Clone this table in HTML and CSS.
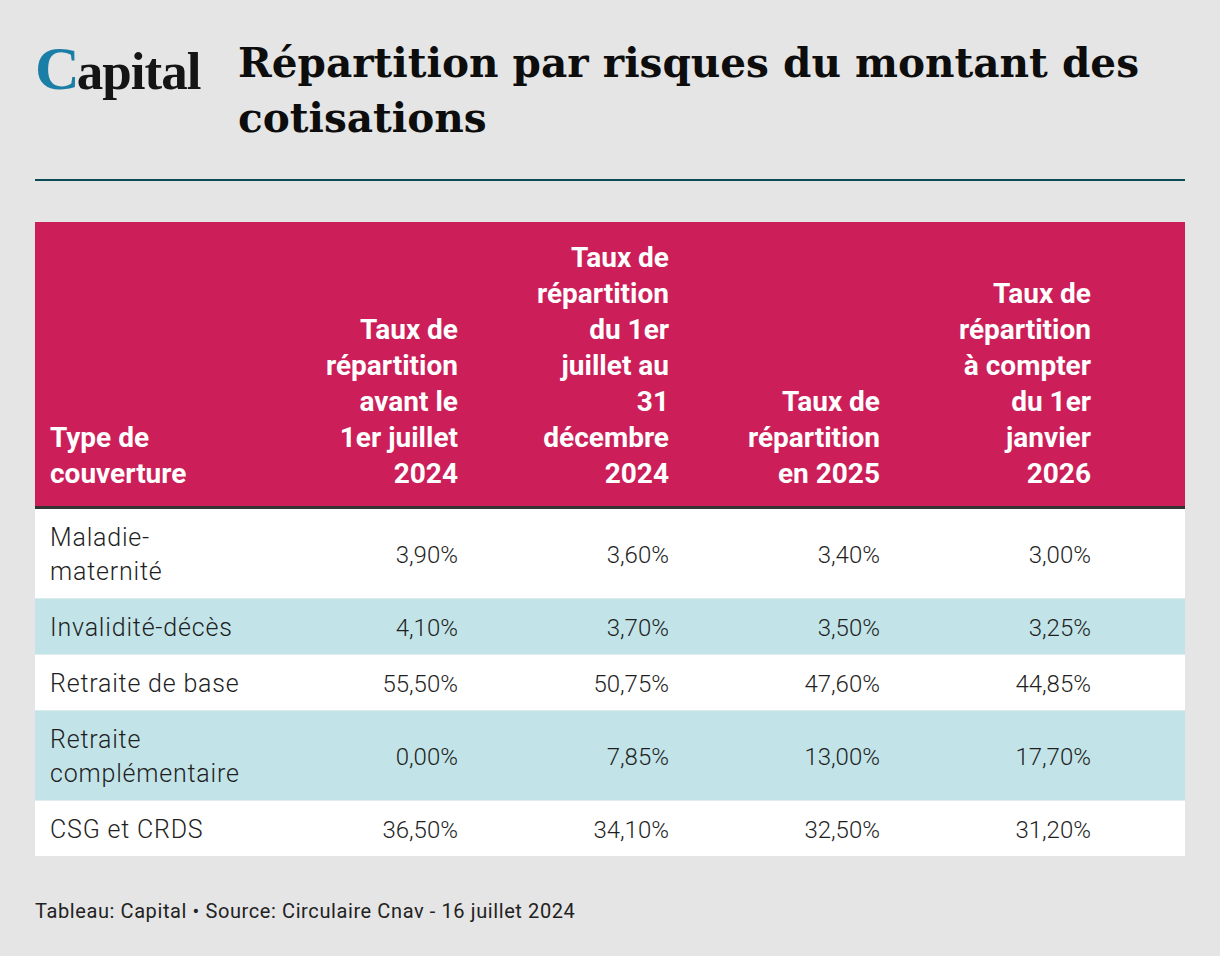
FILE: index.html
```html
<!DOCTYPE html>
<html lang="fr">
<head>
<meta charset="utf-8">
<title>Répartition par risques du montant des cotisations</title>
<link rel="stylesheet" href="styles.css">
</head>
<body>
<div class="page">
  <header class="top">
    <div class="logo"><span class="logo-c">C</span>apital</div>
    <h1 class="title">Répartition par risques du montant des cotisations</h1>
  </header>
  <div class="rule"></div>
  <table class="data">
    <colgroup>
      <col class="c1"><col class="cn"><col class="cn"><col class="cn"><col class="clast">
    </colgroup>
    <thead>
      <tr>
        <th class="left">Type de couverture</th>
        <th>Taux de répartition avant le 1er juillet 2024</th>
        <th>Taux de répartition du 1er juillet au 31 décembre 2024</th>
        <th>Taux de répartition en 2025</th>
        <th class="last">Taux de répartition à compter du 1er janvier 2026</th>
      </tr>
    </thead>
    <tbody>
      <tr><td class="left">Maladie-maternité</td><td>3,90%</td><td>3,60%</td><td>3,40%</td><td class="last">3,00%</td></tr>
      <tr class="alt"><td class="left">Invalidité-décès</td><td>4,10%</td><td>3,70%</td><td>3,50%</td><td class="last">3,25%</td></tr>
      <tr><td class="left">Retraite de base</td><td>55,50%</td><td>50,75%</td><td>47,60%</td><td class="last">44,85%</td></tr>
      <tr class="alt"><td class="left">Retraite complémentaire</td><td>0,00%</td><td>7,85%</td><td>13,00%</td><td class="last">17,70%</td></tr>
      <tr><td class="left">CSG et CRDS</td><td>36,50%</td><td>34,10%</td><td>32,50%</td><td class="last">31,20%</td></tr>
    </tbody>
  </table>
  <p class="footer">Tableau: Capital • Source: Circulaire Cnav - 16 juillet 2024</p>
</div>
</body>
</html>
```

FILE: styles.css
```css
html, body {
  margin: 0;
  padding: 0;
  background: #e5e5e5;
}
body {
  font-family: Roboto, "Liberation Sans", sans-serif;
  color: #1c1c1c;
}
.page {
  padding: 35px 35px 0 35px;
}
.top {
  display: flex;
  align-items: flex-start;
  gap: 42px;
}
.logo {
  font-family: "Liberation Serif", "Times New Roman", serif;
  font-size: 53px;
  line-height: 60px;
  font-weight: 700;
  letter-spacing: -1px;
  color: #151515;
  margin-top: 3px;
  width: 161px;
  white-space: nowrap;
}
.logo-c {
  color: #1b7ea6;
  font-size: 62px;
  letter-spacing: -3px;
}
.title {
  margin: 0;
  font-family: "DejaVu Serif", "Liberation Serif", serif;
  font-weight: 700;
  font-size: 40.6px;
  line-height: 55px;
  color: #0d0d0d;
  max-width: 950px;
  padding-top: 1px;
}
.rule {
  height: 2px;
  background: #0b4a54;
  margin-top: 33px;
}
.data {
  margin-top: 41px;
  width: 1150px;
  border-collapse: collapse;
  table-layout: fixed;
  background: #ffffff;
}
.c1 { width: 228px; }
.cn { width: 211px; }
.clast { width: 289px; }
.data th {
  background: #cc1f5a;
  color: #ffffff;
  font-weight: 700;
  font-size: 28px;
  line-height: 36px;
  text-align: right;
  vertical-align: bottom;
  padding: 18px 16px 14px 57px;
  border-bottom: 3px solid #333333;
}
.data th.left {
  text-align: left;
  padding-left: 15px;
}
.data th.last {
  padding-right: 94px;
}
.data td {
  font-size: 24px;
  font-weight: 300;
  line-height: 34px;
  text-align: right;
  vertical-align: middle;
  padding: 12px 16px 9px 16px;
  color: #1f1f1f;
  border-bottom: 1px solid #d9eaec;
}
.data td.left {
  text-align: left;
  padding-left: 15px;
  font-size: 25px;
  letter-spacing: 0.8px;
}
.data td.last {
  padding-right: 94px;
}
.data tr.alt td {
  background: #c2e4e8;
  border-bottom: 1px solid #e0eced;
}
.data tbody tr:last-child td {
  border-bottom: none;
}
.footer {
  margin: 43px 0 0 0;
  font-size: 20px;
  line-height: 24px;
  letter-spacing: 0.6px;
  font-weight: 400;
  color: #222222;
}
```
